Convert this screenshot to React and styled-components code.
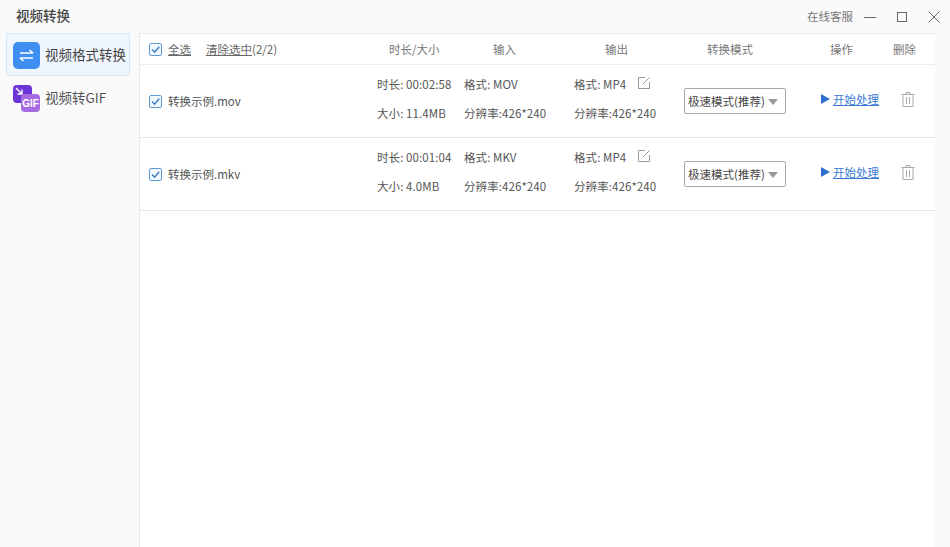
import React from 'react';
import styled, {createGlobalStyle} from 'styled-components';

const GlobalStyle = createGlobalStyle`
    html, body {
        margin : 0;
        padding : 0;
        background : #FAFAFA;
    }
    body {
        font-family : "Noto Sans CJK SC", "Noto Sans", sans-serif;
        font-size : 11.5px;
        color : #555555;
    }
`;

const Page = styled.div`
    width : 950px;
    height : 547px;
    display : flex;
    flex-direction : column;
    overflow : hidden;
    background : #FAFAFA;
`;

const TitleBar = styled.div`
    height : 33px;
    flex : none;
    display : flex;
    align-items : center;
    justify-content : space-between;
    padding : 0 10px 0 16px;
`;

const Title = styled.div`
    font-size : 13.5px;
    font-weight : 500;
    color : #444444;
    margin-top : -3px;
`;

const WindowTools = styled.div`
    display : flex;
    align-items : center;
    gap : 21px;
`;

const ServiceText = styled.div`
    color : #777777;
    margin-right : -10px;
    margin-top : -2px;
`;

const WindowButton = styled.svg`
    width : ${props => props.$size}px;
    height : ${props => props.$size}px;
    flex : none;
    fill : none;
    stroke : #666666;
    stroke-width : 1;
`;

const Body = styled.div`
    flex : 1;
    display : flex;
    min-height : 0;
`;

const Sidebar = styled.div`
    width : 139px;
    flex : none;
    padding : 0 9px 0 6px;
    box-sizing : border-box;
`;

const NavItem = styled.div`
    height : 43px;
    box-sizing : border-box;
    display : flex;
    align-items : center;
    gap : 5px;
    padding-left : 6px;
    font-size : 13.5px;
    white-space : nowrap;
    color : ${props => props.$active ? '#444444' : '#555555'};
    background : ${props => props.$active ? '#EFF6FD' : 'transparent'};
    border : 1px solid ${props => props.$active ? '#D5E6F6' : 'transparent'};
    border-radius : 2px;
`;

const NavIcon = styled.svg`
    width : 27px;
    height : 27px;
    flex : none;
    margin-top : 2px;
`;

const NavText = styled.span`
    margin-top : -2px;
`;

const Panel = styled.div`
    width : 796px;
    flex : none;
    background : #FFFFFF;
    border-left : 1px solid #EAEAEA;
    border-top : 1px solid #EAEAEA;
    box-sizing : border-box;
`;

const columns = '228px 87px 110px 110px 137px 72px 1fr';

const HeaderRow = styled.div`
    height : 31px;
    box-sizing : border-box;
    display : grid;
    grid-template-columns : ${columns};
    align-items : center;
    padding-left : 9px;
    border-bottom : 1px solid #EDEDED;
`;

const HeaderCell = styled.div`
    padding-left : ${props => props.$indent || 0}px;
    margin-top : -1px;
    color : #777777;
`;

const SelectGroup = styled.div`
    display : flex;
    align-items : center;
`;

const Check = styled.svg`
    width : 13px;
    height : 13px;
    flex : none;
    margin-right : 6px;
`;

const PlainLink = styled.span`
    color : #666666;
    text-decoration : underline;
    margin-top : -1px;
    margin-right : ${props => props.$gap || 0}px;
`;

const Count = styled.span`
    color : #666666;
    margin-top : -1px;
`;

const Row = styled.div`
    height : 73px;
    box-sizing : border-box;
    display : grid;
    grid-template-columns : ${columns};
    align-items : center;
    padding-left : 9px;
    border-bottom : 1px solid #E6E6E6;
`;

const NameCell = styled.div`
    display : flex;
    align-items : center;
    color : #555555;
`;

const InfoCell = styled.div`
    display : flex;
    flex-direction : column;
    gap : 11px;
    margin-top : -5px;
    white-space : nowrap;
    letter-spacing : 0.08px;
`;

const InfoLine = styled.div`
    height : 18px;
    line-height : 18px;
    display : flex;
    align-items : center;
    color : #555555;
`;

const EditIcon = styled.svg`
    width : 12px;
    height : 12px;
    margin-left : 12px;
    margin-top : -2px;
    fill : none;
    stroke : #999999;
    stroke-width : 1;
`;

const ModeSelect = styled.div`
    width : 102px;
    height : 26px;
    box-sizing : border-box;
    display : flex;
    align-items : center;
    justify-content : space-between;
    padding : 0 7px 0 3px;
    background : #FFFFFF;
    border : 1px solid #A6A6A6;
    border-radius : 2px;
    color : #444444;
    white-space : nowrap;
`;

const Caret = styled.div`
    width : 0;
    height : 0;
    border-left : 5px solid transparent;
    border-right : 5px solid transparent;
    border-top : 6px solid #999999;
    margin-top : 2px;
`;

const ActionCell = styled.div`
    display : flex;
    align-items : center;
    gap : 3px;
    margin-top : -4px;
`;

const PlayIcon = styled.div`
    width : 0;
    height : 0;
    border-top : 5px solid transparent;
    border-bottom : 5px solid transparent;
    border-left : 9px solid #2F6FD0;
`;

const StartLink = styled.span`
    color : #3A7BD5;
    text-decoration : underline;
`;

const TrashIcon = styled.svg`
    width : 14px;
    height : 15px;
    margin-left : 8px;
    margin-top : -4px;
    fill : none;
    stroke : #AAAAAA;
    stroke-width : 1;
    display : block;
`;

const files = [
    {name : '转换示例.mov', time : '00:02:58', size : '11.4MB', format : 'MOV'},
    {name : '转换示例.mkv', time : '00:01:04', size : '4.0MB', format : 'MKV'},
];

const CheckBox = () => (
    <Check viewBox="0 0 13 13">
        <rect x="0.5" y="0.5" width="12" height="12" rx="1.5" fill="#F3F8FD" stroke="#5B9BD5" />
        <path d="M3 6.5 L5.6 9.2 L10.2 3.8" fill="none" stroke="#3D82C8" strokeWidth="1.5" />
    </Check>
);

const App = () => {
    return (
        <Page>
            <GlobalStyle />
            <TitleBar>
                <Title>视频转换</Title>
                <WindowTools>
                    <ServiceText>在线客服</ServiceText>
                    <WindowButton $size={12} viewBox="0 0 12 12">
                        <path d="M0 6.5 H12" />
                    </WindowButton>
                    <WindowButton $size={10} viewBox="0 0 10 10">
                        <rect x="0.5" y="0.5" width="9" height="9" />
                    </WindowButton>
                    <WindowButton $size={12} viewBox="0 0 12 12">
                        <path d="M0.5 0.5 L11.5 11.5 M11.5 0.5 L0.5 11.5" />
                    </WindowButton>
                </WindowTools>
            </TitleBar>
            <Body>
                <Sidebar>
                    <NavItem $active>
                        <NavIcon viewBox="0 0 27 27">
                            <rect width="27" height="27" rx="5" fill="#3F8FF2" />
                            <path d="M7 11 H20 M16.5 8 L20 11 M20 16 H7 M10.5 19 L7 16" fill="none" stroke="#FFFFFF" strokeWidth="1.6" />
                        </NavIcon>
                        <NavText>视频格式转换</NavText>
                    </NavItem>
                    <NavItem>
                        <NavIcon viewBox="0 0 27 27">
                            <rect x="0" y="0" width="19" height="18" rx="4" fill="#6C35D8" />
                            <path d="M3 3 L9 9 M9 4.5 V9 H4.5" fill="none" stroke="#FFFFFF" strokeWidth="1.4" />
                            <rect x="8" y="9" width="19" height="18" rx="4" fill="#A66BE0" />
                            <text x="17.5" y="22" fontSize="10" fontWeight="700" fill="#FFFFFF" textAnchor="middle" fontFamily="Liberation Sans, sans-serif">GIF</text>
                        </NavIcon>
                        <NavText>视频转GIF</NavText>
                    </NavItem>
                </Sidebar>
                <Panel>
                    <HeaderRow>
                        <SelectGroup>
                            <CheckBox />
                            <PlainLink $gap={15}>全选</PlainLink>
                            <PlainLink>清除选中</PlainLink>
                            <Count>(2/2)</Count>
                        </SelectGroup>
                        <HeaderCell $indent={12}>时长/大小</HeaderCell>
                        <HeaderCell $indent={29}>输入</HeaderCell>
                        <HeaderCell $indent={31}>输出</HeaderCell>
                        <HeaderCell $indent={23}>转换模式</HeaderCell>
                        <HeaderCell $indent={9}>操作</HeaderCell>
                        <HeaderCell>删除</HeaderCell>
                    </HeaderRow>
                    {files.map(file => (
                        <Row key={file.name}>
                            <NameCell>
                                <CheckBox />
                                {file.name}
                            </NameCell>
                            <InfoCell>
                                <InfoLine>时长: {file.time}</InfoLine>
                                <InfoLine>大小: {file.size}</InfoLine>
                            </InfoCell>
                            <InfoCell>
                                <InfoLine>格式: {file.format}</InfoLine>
                                <InfoLine>分辨率:426*240</InfoLine>
                            </InfoCell>
                            <InfoCell>
                                <InfoLine>
                                    格式: MP4
                                    <EditIcon viewBox="0 0 12 12">
                                        <path d="M7 0.5 H0.5 V11.5 H11.5 V5 M5 7 L11.5 0.5" />
                                    </EditIcon>
                                </InfoLine>
                                <InfoLine>分辨率:426*240</InfoLine>
                            </InfoCell>
                            <ModeSelect>
                                极速模式(推荐)
                                <Caret />
                            </ModeSelect>
                            <ActionCell>
                                <PlayIcon />
                                <StartLink>开始处理</StartLink>
                            </ActionCell>
                            <TrashIcon viewBox="0 0 14 15">
                                <path d="M0.5 2.5 H13.5 M5 2.5 V0.5 H9 V2.5 M2 2.5 V14.5 H12 V2.5 M5.5 5 V12 M8.5 5 V12" />
                            </TrashIcon>
                        </Row>
                    ))}
                </Panel>
            </Body>
        </Page>
    );
};

export default App;
